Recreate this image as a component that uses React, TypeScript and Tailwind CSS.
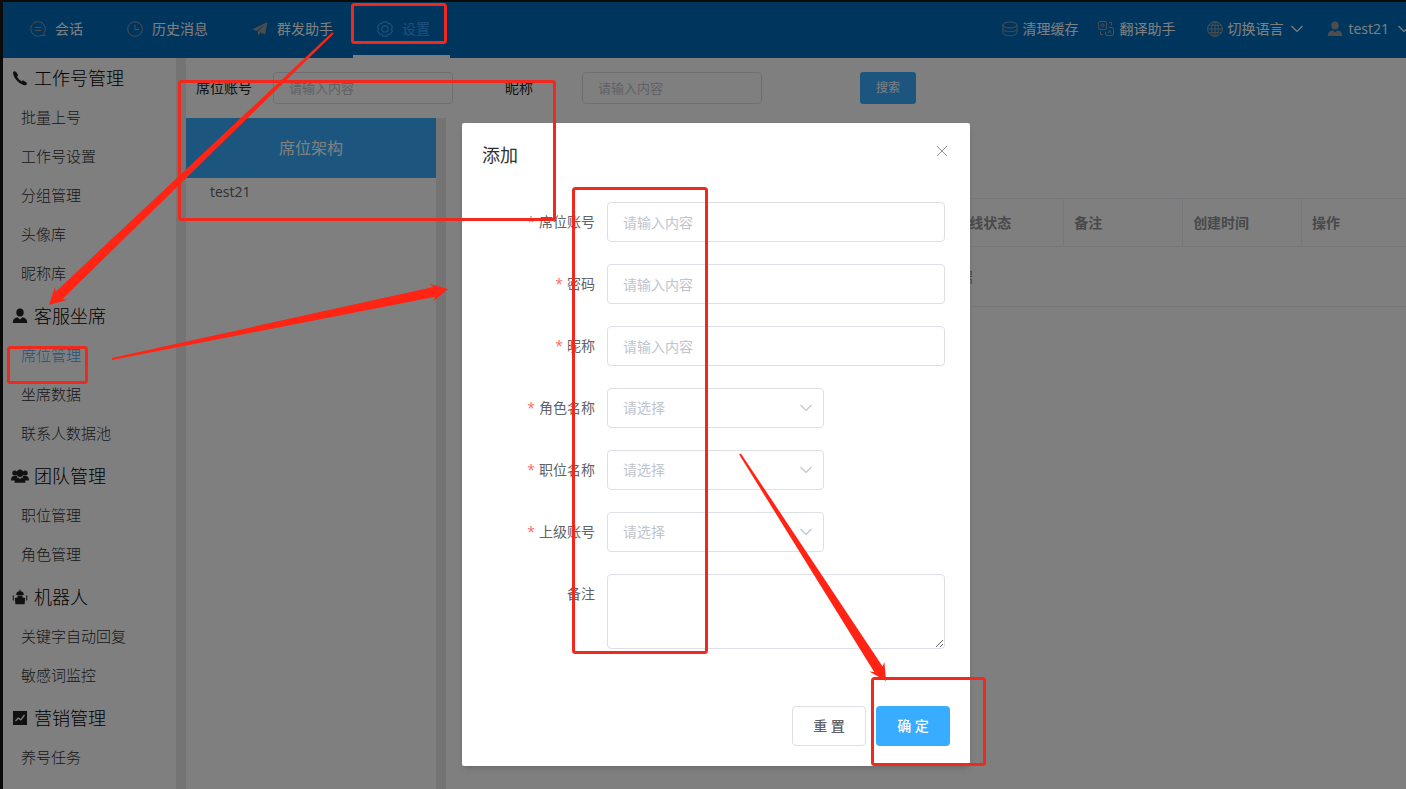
import type { ReactNode } from 'react';

type IconName = 'chat' | 'clock' | 'plane' | 'gear' | 'database' | 'translate' | 'globe' | 'user' | 'robot' | 'chart' | 'phone' | 'team';

const ICON_PATHS: Record<IconName, ReactNode> = {
  chat: (
    <>
      <path d="M13.5 12.6A7.2 7.2 0 1 0 11.2 14.4H15L13.5 12.6Z" />
      <path d="M5 6.5h6M5 9.5h6" />
    </>
  ),
  clock: (
    <>
      <circle cx="8" cy="8" r="7.3" />
      <path d="M8 3.5V8.5h4" />
    </>
  ),
  plane: (
    <path d="M.5 8.2 15.5 1 13 13.5 8.6 11.2 6.2 14.5 5.6 10.4 13 3.5 4.4 9.9Z" fill="currentColor" stroke="none" />
  ),
  gear: (
    <>
      <path
        strokeWidth="1.2"
        strokeLinejoin="round"
        d="M6 .8h4l1.1 1.9 2.2 0L15.4 6l-1 2 1 2-2.100 3.300-2.200 0L10 15.200H6l-1.100-1.900-2.200 0L.6 10l1-2-1-2 2.100-3.300 2.200 0Z"
      />
      <circle cx="8" cy="8" r="3.2" strokeWidth="1.2" />
    </>
  ),
  database: (
    <>
      <ellipse cx="8" cy="4" rx="7" ry="3" />
      <path d="M1 4v3.7c0 1.7 3.1 3 7 3s7-1.3 7-3V4" />
      <path d="M1 8v3.7c0 1.7 3.1 3 7 3s7-1.3 7-3V8" />
    </>
  ),
  translate: (
    <>
      <rect x=".5" y=".5" width="8" height="8" rx="1.5" />
      <circle cx="4.5" cy="4.5" r="1.5" />
      <path d="M10.500 6.500H14a1.500 1.500 0 0 1 1.500 1.500v5a1.500 1.500 0 0 1-1.500 1.500H9A1.500 1.500 0 0 1 7.500 13v-2.500" />
      <path d="M10 12.500l1.600-3.500 1.600 3.500M11 1.500h2.500v3M2.500 10.500v3H5" />
    </>
  ),
  globe: (
    <>
      <circle cx="8" cy="8" r="7.4" />
      <ellipse cx="8" cy="8" rx="3.4" ry="7.4" />
      <path d="M8 .6v14.8M.6 8h14.8M1.800 4.300h12.400M1.800 11.700h12.400" />
    </>
  ),
  user: (
    <g fill="currentColor" stroke="none">
      <ellipse cx="8" cy="4.6" rx="3.7" ry="4" />
      <path d="M.7 15c0-3.500 1.800-5.200 4.700-5.800L8 11.500l2.600-2.300c2.900.6 4.700 2.300 4.700 5.800Z" />
    </g>
  ),
  robot: (
    <g fill="currentColor" stroke="none">
      <path d="M7.500.5h1v1.800A3.700 3.700 0 0 1 11.800 6H4.200A3.700 3.700 0 0 1 7.500 2.300Z" />
      <path d="M5.500 6.600h5v1.600h-5ZM3 9C5 8 11 8 13 9v3l-.5 3.200h-9L3 12Z" />
      <path d="M.8 6.500h1v5h-1ZM14.200 6.500h1v5h-1Z" />
    </g>
  ),
  chart: (
    <>
      <rect x="1" y="1" width="14" height="14" fill="currentColor" stroke="none" />
      <path d="M3.500 11l2.800-3 2.500 1.800L12.500 5" stroke="#fff" strokeWidth="1.3" />
    </>
  ),
  phone: (
    <path
      d="M1 2.200C2 1 3.200.8 4 1.800L5.800 4.400C6.300 5.200 5.800 5.900 5 6.600 6 8.600 7.600 10.200 9.600 11.300 10.300 10.500 11 10.200 11.800 10.700L14.500 12.500C15.300 13.200 15 14.300 13.800 15.200 8.500 15.500 1 8.500 1 2.200Z"
      fill="currentColor"
      stroke="none"
    />
  ),
  team: (
    <g fill="currentColor" stroke="none">
      <circle cx="2.800" cy="5" r="2.500" />
      <circle cx="13.200" cy="5" r="2.500" />
      <path d="M-1 12.500c0-3 1-4.300 3.500-4.700h3L4 12.500ZM17 12.500c0-3-1-4.300-3.500-4.700h-3l1.500 4.700Z" />
      <ellipse cx="8" cy="5.200" rx="3.200" ry="3.700" />
      <path d="M2.500 14.800c0-3.400 1.500-4.900 3.700-5.300L8 11l1.800-1.500c2.200.4 3.700 1.900 3.700 5.300Z" />
    </g>
  ),
};

function Icon({ name, className = '' }: { name: IconName; className?: string }) {
  return (
    <svg viewBox="0 0 16 16" fill="none" stroke="currentColor" className={`size-4 shrink-0 overflow-visible ${className}`}>
      {ICON_PATHS[name]}
    </svg>
  );
}

function Chevron({ className = '' }: { className?: string }) {
  return (
    <svg viewBox="0 0 12 8" fill="none" stroke="currentColor" strokeWidth="1.2" className={`h-2 w-3 shrink-0 ${className}`}>
      <path d="M.5 1 6 6.500 11.500 1" />
    </svg>
  );
}

const TABS: { label: string; icon: IconName; active?: boolean }[] = [
  { label: '会话', icon: 'chat' },
  { label: '历史消息', icon: 'clock' },
  { label: '群发助手', icon: 'plane' },
  { label: '设置', icon: 'gear', active: true },
];

const SECTIONS: { title: string; icon: IconName; items: string[] }[] = [
  { title: '工作号管理', icon: 'phone', items: ['批量上号', '工作号设置', '分组管理', '头像库', '昵称库'] },
  { title: '客服坐席', icon: 'user', items: ['席位管理', '坐席数据', '联系人数据池'] },
  { title: '团队管理', icon: 'team', items: ['职位管理', '角色管理'] },
  { title: '机器人', icon: 'robot', items: ['关键字自动回复', '敏感词监控'] },
  { title: '营销管理', icon: 'chart', items: ['养号任务'] },
];

const COLUMNS = ['', '', '', '', '在线状态', '备注', '创建时间', '操作'];

function TopBar() {
  return (
    <header className="flex h-14 items-stretch bg-[#006cba] pl-[3px] text-sm text-white">
      <nav className="flex">
        {TABS.map((tab) => (
          <a
            key={tab.label}
            href="#"
            className={`flex items-center gap-[9px] border-b-3 pr-5 pl-6 ${
              tab.active ? 'border-white text-[#409eff]' : 'border-transparent'
            }`}
          >
            <Icon name={tab.icon} className={tab.active ? '' : 'text-[#9a9a9a]'} />
            {tab.label}
          </a>
        ))}
      </nav>
      <div className="-mr-1 ml-auto flex shrink-0 items-center pb-[3px]">
        <button className="mr-5 flex items-center gap-1">
          <Icon name="database" className="text-[#9a9a9a]" />
          清理缓存
        </button>
        <button className="mr-8 flex items-center gap-[5px]">
          <Icon name="translate" className="text-[#9a9a9a]" />
          翻译助手
        </button>
        <button className="mr-6 flex items-center gap-1">
          <Icon name="globe" className="text-[#9a9a9a]" />
          切换语言
          <Chevron className="ml-1" />
        </button>
        <button className="flex items-center gap-[5px]">
          <Icon name="user" className="text-[#9a9a9a]" />
          test21
          <Chevron className="ml-1" />
        </button>
      </div>
    </header>
  );
}

function Sidebar() {
  return (
    <aside className="flex w-[183px] shrink-0 flex-col gap-[3px] border-r-10 border-[#e8e8e8]">
      {SECTIONS.map((section) => (
        <section key={section.title}>
          <h2 className="flex h-10 items-center gap-[6px] pl-[9px] text-lg font-light text-black">
            <Icon name={section.icon} className="text-[#222]" />
            {section.title}
          </h2>
          <ul className="text-[15px] font-light">
            {section.items.map((item) => (
              <li key={item} className="flex h-[39px] items-center pl-[18px]">
                <a href="#" className={item === '席位管理' ? 'text-[#38adff]' : 'text-[#303133]'}>
                  {item}
                </a>
              </li>
            ))}
          </ul>
        </section>
      ))}
    </aside>
  );
}

function SearchBar() {
  const input =
    'h-8 w-[180px] rounded border border-[#dcdfe6] px-[15px] text-[13px] placeholder:text-[#c0c4cc]';
  return (
    <form className="flex h-[60px] items-center pl-[10px] text-sm text-[#222]">
      <label htmlFor="search-account" className="mr-[21px]">席位账号</label>
      <input id="search-account" placeholder="请输入内容" className={`mr-[52px] ${input}`} />
      <label htmlFor="search-nick" className="mr-[49px]">昵称</label>
      <input id="search-nick" placeholder="请输入内容" className={`mr-[98px] ${input}`} />
      <button type="button" className="h-8 rounded-[3px] bg-[#38adff] px-4 text-xs text-white">
        搜索
      </button>
    </form>
  );
}

function SeatTable() {
  return (
    <div className="min-w-0 flex-1 overflow-hidden pt-20 pl-[23px]">
      <table className="w-[952px] table-fixed border-collapse text-sm text-[#909399]">
        <thead>
          <tr className="h-12 border-y border-[#ebeef5]">
            {COLUMNS.map((column, i) => (
              <th key={i} className="border-r border-[#ebeef5] px-[10px] text-left font-bold">
                {column}
              </th>
            ))}
          </tr>
        </thead>
        <tbody>
          <tr className="h-15 border-b border-[#ebeef5]">
            <td colSpan={COLUMNS.length} className="text-center">暂无数据</td>
          </tr>
        </tbody>
      </table>
    </div>
  );
}

function Field({ id, label, required, children }: { id: string; label: string; required?: boolean; children: ReactNode }) {
  return (
    <div className="flex gap-3">
      <label htmlFor={id} className="h-10 w-[113px] text-right leading-10">
        {required && <span className="mr-1 text-[#f56c6c]">*</span>}
        {label}
      </label>
      {children}
    </div>
  );
}

const INPUTS = [
  { id: 'account', label: '席位账号', type: 'text' },
  { id: 'password', label: '密码', type: 'password' },
  { id: 'nick', label: '昵称', type: 'text' },
];

const SELECTS = [
  { id: 'role', label: '角色名称' },
  { id: 'position', label: '职位名称' },
  { id: 'parent', label: '上级账号' },
];

function AddDialog() {
  const box = 'rounded border border-[#dcdfe6] bg-white';
  return (
    <div role="dialog" aria-label="添加" className="w-[508px] rounded-xs bg-white p-5 text-sm text-[#606266] shadow-md">
      <div className="flex h-6 items-start justify-between pr-[2px]">
        <h3 className="text-lg leading-6 text-[#303133]">添加</h3>
        <button aria-label="关闭" className="pt-[2px] text-[#909399]">
          <svg viewBox="0 0 12 12" stroke="currentColor" className="size-3">
            <path d="M1 1l10 10M11 1L1 11" />
          </svg>
        </button>
      </div>
      <form className="mt-[35px] flex flex-col gap-[22px] pr-[5px]">
        {INPUTS.map((f) => (
          <Field key={f.id} id={f.id} label={f.label} required>
            <input
              id={f.id}
              type={f.type}
              placeholder="请输入内容"
              className={`h-10 min-w-0 flex-1 px-[15px] placeholder:text-[#c0c4cc] ${box}`}
            />
          </Field>
        ))}
        {SELECTS.map((f) => (
          <Field key={f.id} id={f.id} label={f.label} required>
            <div className="relative w-[217px]">
              <select id={f.id} className={`h-10 w-full appearance-none px-[15px] text-[#c0c4cc] ${box}`}>
                <option>请选择</option>
              </select>
              <Chevron className="pointer-events-none absolute top-4 right-3 text-[#c0c4cc]" />
            </div>
          </Field>
        ))}
        <Field id="remark" label="备注">
          <textarea id="remark" className={`h-[75px] min-w-0 flex-1 resize px-[15px] ${box}`} />
        </Field>
      </form>
      <div className="mt-[57px] flex justify-end gap-[10px]">
        <button className={`h-10 w-[74px] font-medium ${box}`}>重 置</button>
        <button className="h-10 w-[74px] rounded bg-[#38adff] font-medium text-white">确 定</button>
      </div>
    </div>
  );
}

// Tapered arrow: a point at the start that widens into a barbed head at the end
function arrowPoints(x1: number, y1: number, x2: number, y2: number) {
  const len = Math.hypot(x2 - x1, y2 - y1);
  const ux = (x2 - x1) / len;
  const uy = (y2 - y1) / len;
  const at = (back: number, side: number) => `${x2 - ux * back - uy * side},${y2 - uy * back + ux * side}`;
  return [at(len, 1), at(14, 5), at(17, 9), at(0, 0), at(17, -9), at(14, -5), at(len, -1)].join(' ');
}

const MARKS = [
  { x: 352, y: 4, w: 94, h: 39 },
  { x: 179, y: 81, w: 376, h: 139 },
  { x: 8, y: 347, w: 79, h: 36 },
  { x: 573, y: 188, w: 134, h: 465 },
  { x: 872, y: 678, w: 113, h: 87 },
];

const ARROWS = [
  [333, 33, 49, 305],
  [112, 359, 448, 289],
  [740, 454, 886, 681],
];

function Annotations() {
  return (
    <svg className="pointer-events-none absolute inset-0 size-full">
      {MARKS.map((m) => (
        <rect key={m.y} x={m.x + 0.5} y={m.y + 0.5} width={m.w - 1} height={m.h - 1} rx="2" fill="none" stroke="#f0281e" strokeWidth="3" />
      ))}
      {ARROWS.map(([x1, y1, x2, y2]) => (
        <polygon key={x1} points={arrowPoints(x1, y1, x2, y2)} fill="#ff2414" />
      ))}
    </svg>
  );
}

export default function App() {
  return (
    <div className="relative h-screen overflow-hidden bg-white font-['Open_Sans','Noto_Sans_CJK_SC',sans-serif]">
      <div className="flex h-full flex-col border-t-2 border-l-3 border-[#161616]">
        <TopBar />
        <div className="flex min-h-0 flex-1">
          <Sidebar />
          <main className="flex min-w-0 flex-1 flex-col">
            <SearchBar />
            <div className="flex min-h-0 flex-1">
              <div className="w-[260px] shrink-0 border-r-10 border-[#e8e8e8]">
                <h2 className="flex h-15 items-center justify-center bg-[#38adff] text-base text-white">席位架构</h2>
                <p className="pt-1 pl-6 text-sm text-[#606266]">test21</p>
              </div>
              <SeatTable />
            </div>
          </main>
        </div>
      </div>

      <div className="absolute inset-0 flex items-start justify-center bg-black/50 pt-[123px] pl-[26px]">
        <AddDialog />
      </div>

      <Annotations />
    </div>
  );
}
